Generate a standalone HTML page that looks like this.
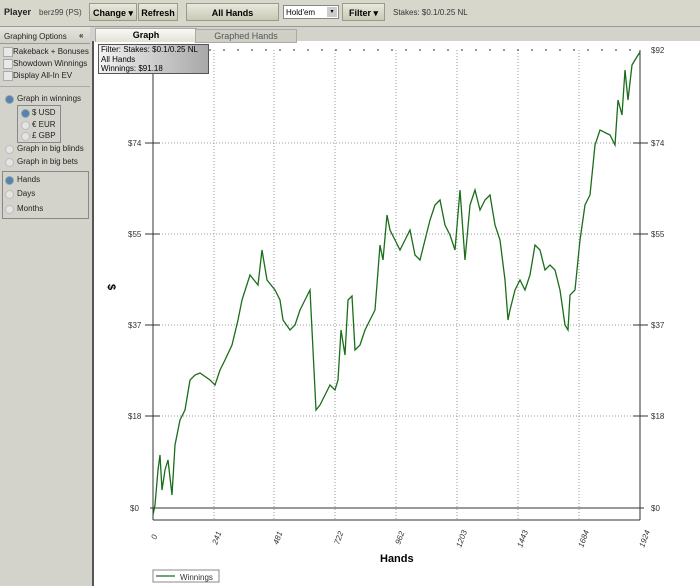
<!DOCTYPE html><html><head><style>
body{margin:0;width:700px;height:586px;background:#fff;font-family:"Liberation Sans",sans-serif;overflow:hidden;position:relative}
.a{position:absolute}
.btn{position:absolute;top:3px;height:18px;background:linear-gradient(#e8e8dc,#c9c9b6);border:1px solid #9a9a8a;font-size:9px;font-weight:bold;line-height:18px;text-align:center;box-sizing:border-box}
.side{font-size:8px;color:#222}
.cb{position:absolute;width:8px;height:8px;background:#e8e8e8;border:1px solid #aaa}
.rd{position:absolute;width:7px;height:7px;border-radius:50%;background:#e4e4e4;border:1px solid #bbb}
.rd.on{background:#5a7fb0;border-color:#8aa}
.lbl{position:absolute;font-size:8px;color:#222;white-space:nowrap}
</style></head><body>
<div class="a" style="left:0;top:0;width:700px;height:26px;background:#d8d7cc;border-bottom:1px solid #999"></div>
<div class="lbl" style="left:4px;top:7px;font-size:9px;font-weight:bold">Player</div>
<div class="lbl" style="left:39px;top:8px;color:#444">berz99 (PS)</div>
<div class="btn" style="left:89px;width:48px">Change ▾</div>
<div class="btn" style="left:138px;width:40px">Refresh</div>
<div class="btn" style="left:186px;width:93px">All Hands</div>
<div class="a" style="left:283px;top:5px;width:56px;height:14px;background:#fff;border:1px solid #888;font-size:8px;line-height:14px;padding-left:2px;box-sizing:border-box">Hold'em<span style="position:absolute;right:1px;top:1px;width:10px;height:10px;background:#ccc;font-size:6px;line-height:10px;text-align:center">▾</span></div>
<div class="btn" style="left:342px;width:43px">Filter ▾</div>
<div class="lbl" style="left:393px;top:8px;color:#333">Stakes: $0.1/0.25 NL</div>
<div class="a" style="left:0;top:27px;width:92px;height:559px;background:#d4d3cb;border-right:2px solid #555"></div>
<div class="a" style="left:92px;top:27px;width:608px;height:14px;background:#d4d3cb"></div>
<div class="a" style="left:95px;top:28px;width:100px;height:13px;background:linear-gradient(#fafaf5,#e2e2d8);border:1px solid #aaa;border-bottom:none;font-size:9px;font-weight:bold;text-align:center;line-height:13px">Graph</div>
<div class="a" style="left:195px;top:29px;width:100px;height:12px;background:#cfcfc6;border:1px solid #aaa;font-size:9px;color:#555;text-align:center;line-height:12px">Graphed Hands</div>
<div class="a" style="left:0;top:27px;width:90px;height:16px;background:linear-gradient(#e6e6de,#cfcfc6);border-bottom:1px solid #999"></div>
<div class="lbl" style="left:4px;top:32px">Graphing Options</div><div class="lbl" style="left:79px;top:31px;font-weight:bold">«</div>
<div class="cb" style="left:3px;top:47px"></div><div class="lbl" style="left:13px;top:47px">Rakeback + Bonuses</div>
<div class="cb" style="left:3px;top:59px"></div><div class="lbl" style="left:13px;top:59px">Showdown Winnings</div>
<div class="cb" style="left:3px;top:71px"></div><div class="lbl" style="left:13px;top:71px">Display All-In EV</div>
<div class="a" style="left:0;top:86px;width:90px;height:1px;background:#aaa"></div>
<div class="rd on" style="left:5px;top:95px"></div><div class="lbl" style="left:17px;top:94px">Graph in winnings</div>
<div class="a" style="left:17px;top:105px;width:42px;height:36px;border:1px solid #888"></div>
<div class="rd on" style="left:21px;top:109px"></div><div class="lbl" style="left:32px;top:108px">$ USD</div>
<div class="rd" style="left:21px;top:121px"></div><div class="lbl" style="left:32px;top:120px">€ EUR</div>
<div class="rd" style="left:21px;top:132px"></div><div class="lbl" style="left:32px;top:131px">£ GBP</div>
<div class="rd" style="left:5px;top:145px"></div><div class="lbl" style="left:17px;top:144px">Graph in big blinds</div>
<div class="rd" style="left:5px;top:158px"></div><div class="lbl" style="left:17px;top:157px">Graph in big bets</div>
<div class="a" style="left:2px;top:171px;width:85px;height:46px;border:1px solid #888"></div>
<div class="rd on" style="left:5px;top:176px"></div><div class="lbl" style="left:17px;top:175px">Hands</div>
<div class="rd" style="left:5px;top:190px"></div><div class="lbl" style="left:17px;top:189px">Days</div>
<div class="rd" style="left:5px;top:205px"></div><div class="lbl" style="left:17px;top:204px">Months</div>
<svg class="a" style="left:0;top:0" width="700" height="586">
<g stroke="#999" stroke-dasharray="1,2" stroke-width="1">
<line x1="153" y1="143" x2="640" y2="143"/><line x1="153" y1="234" x2="640" y2="234"/><line x1="153" y1="325" x2="640" y2="325"/><line x1="153" y1="416" x2="640" y2="416"/>
<line x1="214" y1="50" x2="214" y2="520"/><line x1="274" y1="50" x2="274" y2="520"/><line x1="335" y1="50" x2="335" y2="520"/><line x1="396" y1="50" x2="396" y2="520"/><line x1="457" y1="50" x2="457" y2="520"/><line x1="518" y1="50" x2="518" y2="520"/><line x1="579" y1="50" x2="579" y2="520"/>
</g>
<g stroke="#333" stroke-width="1" fill="none">
<line x1="153" y1="50" x2="153" y2="520"/><line x1="640" y1="50" x2="640" y2="520"/>
<line x1="150" y1="508" x2="644" y2="508"/><line x1="153" y1="520" x2="640" y2="520"/>
<line x1="145" y1="143" x2="160" y2="143"/><line x1="145" y1="234" x2="160" y2="234"/><line x1="145" y1="325" x2="160" y2="325"/><line x1="145" y1="416" x2="160" y2="416"/>
<line x1="633" y1="143" x2="648" y2="143"/><line x1="633" y1="234" x2="648" y2="234"/><line x1="633" y1="325" x2="648" y2="325"/><line x1="633" y1="416" x2="648" y2="416"/>
<line x1="153" y1="50" x2="640" y2="50" stroke-dasharray="2,12"/>
</g>
<polyline fill="none" stroke="#1a6e1a" stroke-width="1.3" points="153,515 155,505 158,470 160,455 162,490 165,470 168,460 172,495 175,445 180,420 185,410 190,380 195,375 200,373 210,380 215,385 220,370 225,360 232,345 238,320 242,300 250,275 258,285 262,250 267,280 275,290 280,300 283,320 290,330 295,325 300,310 305,300 310,290 313,350 316,410 320,405 325,395 330,385 335,390 338,380 341,330 345,355 348,300 352,296 355,350 360,345 365,330 375,310 380,245 383,260 387,215 390,230 395,240 400,250 405,240 410,230 415,255 420,260 430,220 435,205 440,200 445,225 450,235 455,250 460,190 465,260 470,205 475,190 480,210 485,200 490,195 495,225 500,240 505,280 508,320 510,310 515,290 520,280 525,290 530,275 535,245 540,250 545,270 550,265 555,270 560,290 565,325 568,330 570,295 575,290 580,240 585,205 590,195 595,145 600,130 610,135 615,145 618,100 622,115 625,70 628,100 632,65 635,60 640,52"/>
<g font-size="8" fill="#333" font-family="Liberation Sans">
<text x="128" y="146">$74</text><text x="128" y="237">$55</text><text x="128" y="328">$37</text><text x="128" y="419">$18</text><text x="130" y="511">$0</text>
<text x="651" y="53">$92</text><text x="651" y="146">$74</text><text x="651" y="237">$55</text><text x="651" y="328">$37</text><text x="651" y="419">$18</text><text x="651" y="511">$0</text>
<g font-style="italic">
<text transform="translate(156,540) rotate(-70)">0</text><text transform="translate(217,545) rotate(-70)">241</text><text transform="translate(278,545) rotate(-70)">481</text><text transform="translate(339,545) rotate(-70)">722</text><text transform="translate(400,545) rotate(-70)">962</text><text transform="translate(461,548) rotate(-70)">1203</text><text transform="translate(522,548) rotate(-70)">1443</text><text transform="translate(583,548) rotate(-70)">1684</text><text transform="translate(644,548) rotate(-70)">1924</text>
</g></g>
<text x="380" y="562" font-size="11" font-weight="bold" font-family="Liberation Sans">Hands</text>
<text transform="translate(108,284) rotate(90)" font-size="11" font-weight="bold" font-family="Liberation Sans">$</text>
<rect x="153" y="570" width="66" height="12" fill="#fff" stroke="#888"/>
<line x1="156" y1="576" x2="175" y2="576" stroke="#1a6e1a" stroke-width="1.3"/>
<text x="180" y="580" font-size="8" fill="#333" font-family="Liberation Sans">Winnings</text>
</svg>
<div class="a" style="left:98px;top:44px;width:111px;height:30px;background:linear-gradient(90deg,#f2f2f2,#a8a8a8);border:1px solid #555;font-size:8px;line-height:9.5px;padding-left:2px;box-sizing:border-box">Filter: Stakes: $0.1/0.25 NL<br>All Hands<br>Winnings: $91.18</div>
</body></html>
